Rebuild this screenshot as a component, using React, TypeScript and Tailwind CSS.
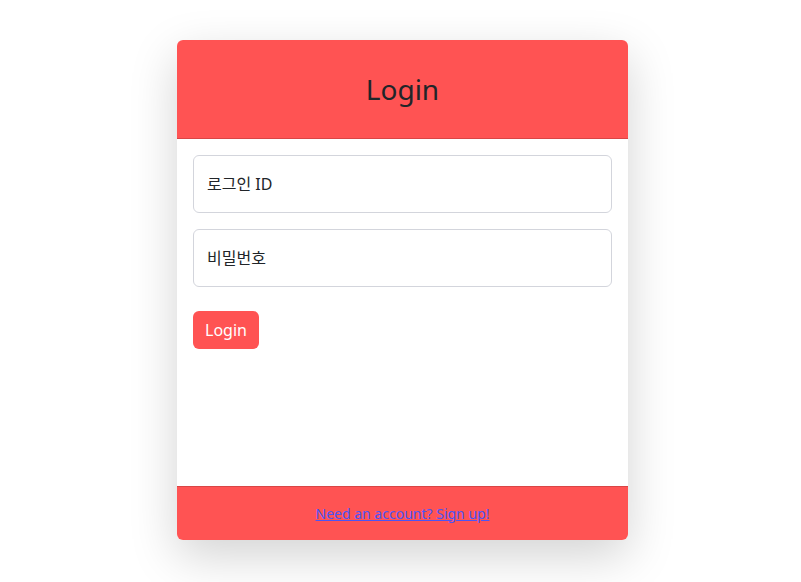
import React from 'react'

const App = () => {
    return (
        <div className="min-h-[582px] w-full bg-white pt-10 flex justify-center pl-1" style={{ fontFamily: '"Noto Sans", "Noto Sans CJK KR", sans-serif' }}>
            <div className="w-[451px] h-[500px] flex flex-col rounded-md overflow-hidden bg-white shadow-[0_1rem_3rem_rgba(0,0,0,0.175)]">
                <div className="h-[99px] bg-[#ff5353] border-b border-[#d94545] flex items-center justify-center">
                    <h3 className="text-[28px] leading-tight text-[#212529] font-normal">Login</h3>
                </div>
                <div className="flex-1 p-4">
                    <div className="mb-4">
                        <input
                            className="w-full h-[58px] rounded-md border border-[#d3d5dc] px-[13px] text-base text-[#212529] placeholder:text-[#212529] outline-none"
                            placeholder="로그인 ID"
                        />
                    </div>
                    <div className="mb-6">
                        <input
                            type="password"
                            className="w-full h-[58px] rounded-md border border-[#d3d5dc] px-[13px] text-base text-[#212529] placeholder:text-[#212529] outline-none"
                            placeholder="비밀번호"
                        />
                    </div>
                    <button className="h-[38px] px-3 rounded-md bg-[#ff5353] text-white text-base">Login</button>
                </div>
                <div className="h-[54px] bg-[#ff5353] border-t border-[#d94545] flex items-center justify-center">
                    <a href="#" className="text-sm text-[#4b55f5] underline">Need an account? Sign up!</a>
                </div>
            </div>
        </div>
    )
}

export default App
